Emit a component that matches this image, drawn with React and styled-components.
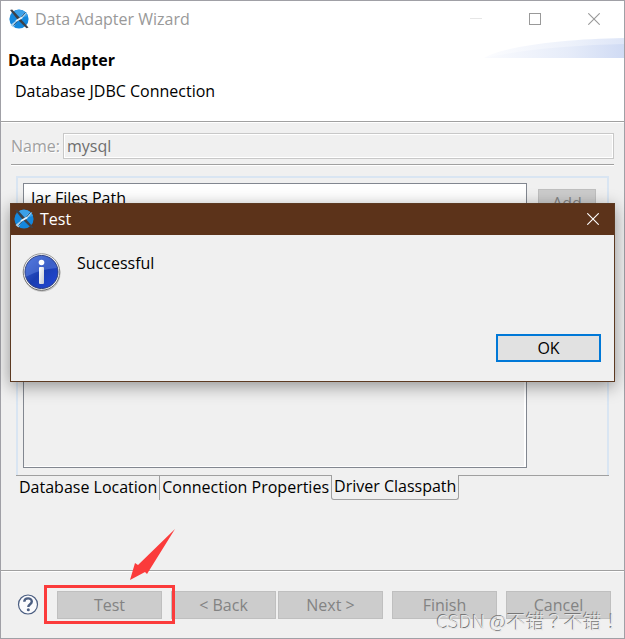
import React, { useState } from 'react';
import styled, { createGlobalStyle } from 'styled-components';

const GlobalStyle = createGlobalStyle`
  * {
    box-sizing: border-box;
  }

  body {
    margin: 0;
    background-color: #f0f0f0;
    color: #000;
    font-family: 'Open Sans', 'Noto Sans', 'Noto Sans CJK SC', sans-serif;
    font-size: 16px;
    line-height: 20px;
  }

  button,
  input {
    font: inherit;
  }
`;

const Window = styled.main`
  position: relative;
  display: flex;
  flex-direction: column;
  min-height: 100vh;
  border: 1px solid #a0a0a6;
  background-color: #f0f0f0;
`;

const TitleBar = styled.div`
  display: flex;
  align-items: center;
  height: 37px;
  padding: 0 8px 2px;
  background-color: #fff;
  color: #999;

  svg {
    flex: none;
  }
`;

const WindowTitle = styled.span`
  flex: 1;
  margin-left: 6px;
`;

const WindowControls = styled.div`
  display: flex;
  gap: 35px;
  margin-right: 10px;
`;

const ControlButton = styled.button`
  display: flex;
  align-items: center;
  justify-content: center;
  width: 24px;
  height: 24px;
  padding: 0;
  border: none;
  background: none;
  color: ${({ $color }) => $color};
`;

const Header = styled.header`
  display: flex;
  justify-content: space-between;
  align-items: flex-start;
  height: 84px;
  border-bottom: 1px solid #a0a0a0;
  background-color: #fff;
`;

const HeaderText = styled.div`
  padding: 12px 0 0 7px;
`;

const Heading = styled.h1`
  margin: 0;
  font-size: 16px;
  line-height: 20px;
  font-weight: 700;
`;

const Subheading = styled.p`
  margin: 11px 0 0 7px;
`;

const Content = styled.section`
  flex: 1;
  padding: 10px 10px 0;
  border-top: 1px solid #fff;
`;

const NameRow = styled.div`
  display: flex;
  align-items: center;
  gap: 3px;
`;

const NameLabel = styled.label`
  color: #a0a0a0;
  text-shadow: 1px 1px 0 #fff;
`;

const NameInput = styled.input`
  flex: 1;
  min-width: 0;
  height: 26px;
  padding: 0 3px;
  border: 1px solid #c8c8c8;
  border-radius: 0;
  outline: none;
  background-color: #f0f0f0;
  box-shadow: inset 0 0 0 1px #fff;
  color: #6d6d6d;
`;

const Separator = styled.hr`
  height: 2px;
  margin: 5px 0 10px;
  border: none;
  border-top: 1px solid #a0a0a0;
  border-bottom: 1px solid #fff;
`;

const Panel = styled.div`
  display: flex;
  align-items: flex-start;
  gap: 11px;
  margin: 0 5px;
  padding: 5px 11px 7px 5px;
  border: 2px solid #d9e5f2;
  border-bottom: none;
`;

const JarTable = styled.table`
  flex: 1;
  height: 285px;
  border: 1px solid #828790;
  border-spacing: 0;
  box-shadow: inset -2px -1px 0 #fff;

  th {
    height: 28px;
    padding: 0 7px;
    background-color: #fff;
    font-weight: 400;
    text-align: left;
  }
`;

const GrayButton = styled.button`
  width: ${({ $width }) => $width || 105}px;
  height: 28px;
  padding: 0;
  border: 1px solid #bfbfbf;
  background-color: #ccc;
  color: #838383;
`;

const AddButton = styled(GrayButton)`
  margin-top: 6px;
`;

const Tabs = styled.div`
  display: flex;
  margin: 0 5px;

  &::after {
    content: '';
    flex: 1;
    border-top: 1px solid #a0a0a0;
  }
`;

const Tab = styled.button`
  height: 25px;
  padding: 0 2px 2px;
  border: 0 solid #a0a0a0;
  background: none;
  color: #000;
  border-width: ${({ $active }) => ($active ? '0 1px 1px' : '1px 0 0')};
  border-radius: ${({ $active }) => ($active ? '0 0 3px 3px' : '0')};

  &:first-child {
    border-right-width: 1px;
    padding-left: 3px;
  }
`;

const Footer = styled.footer`
  display: flex;
  align-items: center;
  height: 68px;
  padding: 0 13px 0 16px;
  border-top: 1px solid #a0a0a0;
  box-shadow: inset 0 1px 0 #fff;
`;

const HelpButton = styled.button`
  display: flex;
  width: 22px;
  height: 22px;
  padding: 0;
  border: none;
  background: none;
`;

const ButtonRow = styled.div`
  display: flex;
  flex: 1;
  justify-content: flex-end;
  gap: 9px;
`;

const StepButtons = styled.div`
  display: flex;
  gap: 2px;
`;

const Highlighted = styled.div`
  position: relative;
  z-index: 1;
  display: flex;

  &::after {
    content: '';
    position: absolute;
    inset: -6px -13px -5px -13px;
    border: 3px solid #fb3b3b;
    pointer-events: none;
  }
`;

const ArrowMark = styled.svg`
  position: absolute;
  left: 73px;
  bottom: 38px;
`;

const Dialog = styled.section`
  position: absolute;
  top: 202px;
  left: 9px;
  right: 9px;
  border: 1px solid #5c3a22;
  background-color: #f0f0f0;
  box-shadow: 0 4px 16px rgba(0, 0, 0, 0.4);
`;

const DialogBar = styled.div`
  display: flex;
  align-items: center;
  height: 31px;
  padding: 0 9px 2px 3px;
  background-color: #5c331a;
  color: #fff;
`;

const DialogBody = styled.div`
  display: flex;
  align-items: flex-start;
  gap: 15px;
  padding: 18px 11px 0;

  p {
    margin: 0;
  }
`;

const DialogActions = styled.div`
  display: flex;
  justify-content: flex-end;
  padding: 41px 13px 19px;
`;

const OkButton = styled.button`
  width: 105px;
  height: 28px;
  padding: 0;
  border: 2px solid #0078d7;
  background-color: #e1e1e1;
  color: #000;
`;

const Watermark = styled.span`
  position: absolute;
  right: 3px;
  bottom: 5px;
  color: #e6e6e6;
  font-family: 'Noto Sans CJK JP', sans-serif;
  font-size: 19px;
  font-weight: 300;
  line-height: 24px;
  text-shadow: -1px -1px 0 #777;
  white-space: nowrap;
  pointer-events: none;
`;

const AppIcon = () => (
  <svg width="20" height="20" viewBox="0 0 20 20" aria-hidden="true">
    <circle cx="10" cy="10" r="9.6" fill="#1487dc" />
    <path d="M5 2.2A9.6 9.6 0 0 1 19 7L11 9Z" fill="#3ba0e8" />
    <path d="M9 10L1.500 16 4.500 18.500Z" fill="#a9d3f0" />
    <path d="M9.500 10.500L14 5.500 18.500 3 13.500 9Z" fill="#b9dcf4" />
    <path d="M1 1L3.200 0.500L10.500 8.500L19.500 18.500L17.500 19.200L8.500 10.500Z" fill="#3e4147" />
    <path d="M4.500 16.500L16.500 3.500" stroke="#2b567a" strokeWidth="1" />
    <path d="M7 12L13 8.500" stroke="#e4f1fa" strokeWidth="2" />
  </svg>
);

const CloseIcon = ({ size = 12 }) => (
  <svg width={size} height={size} viewBox="0 0 12 12" aria-hidden="true">
    <path d="M0.300 0.300L11.700 11.700M11.700 0.300L0.300 11.700" stroke="currentColor" strokeWidth="1.100" />
  </svg>
);

const InfoIcon = () => (
  <svg width="40" height="40" viewBox="0 0 40 40" aria-hidden="true">
    <defs>
      <linearGradient id="infoRim" x1="0" y1="0" x2="0" y2="1">
        <stop offset="0" stopColor="#999" />
        <stop offset="1" stopColor="#666" />
      </linearGradient>
      <linearGradient id="infoFill" x1="0" y1="0" x2="1" y2="1">
        <stop offset="0" stopColor="#3f68d8" />
        <stop offset="0.5" stopColor="#1a3db0" />
        <stop offset="1" stopColor="#2448dc" />
      </linearGradient>
      <linearGradient id="infoLetter" x1="0" y1="0" x2="1" y2="1">
        <stop offset="0" stopColor="#fff" />
        <stop offset="1" stopColor="#c4c8d2" />
      </linearGradient>
    </defs>
    <circle cx="20" cy="20.500" r="18.500" fill="#aaa" opacity="0.600" />
    <circle cx="19.500" cy="19" r="18.300" fill="#f4f4f4" stroke="url(#infoRim)" />
    <circle cx="19.500" cy="19" r="16.500" fill="url(#infoFill)" stroke="#2a3c7c" />
    <path d="M3.500 20A16 16 0 0 1 35 15Q18 16 3.500 24Z" fill="#7da0f0" opacity="0.350" />
    <circle cx="19.500" cy="9.500" r="2.800" fill="#fff" />
    <rect x="17" y="14" width="5" height="17" rx="1" fill="url(#infoLetter)" />
  </svg>
);

const HelpIcon = () => (
  <svg width="22" height="22" viewBox="0 0 22 22" aria-hidden="true">
    <circle cx="11" cy="10.500" r="9.500" fill="#fbfbfd" stroke="#4c5f82" strokeWidth="1.200" />
    <path
      d="M7.300 7.800C7.300 3.300 14.800 3.300 14.800 7.500C14.800 10.300 11.300 10.100 11.300 13.100"
      fill="none"
      stroke="#4c5f82"
      strokeWidth="2.400"
    />
    <circle cx="11.300" cy="15.800" r="1.500" fill="#4c5f82" />
  </svg>
);

const HeaderSwoosh = () => (
  <svg width="140" height="20" viewBox="0 0 140 20" aria-hidden="true">
    <defs>
      <linearGradient id="swoosh" x1="0" y1="0" x2="1" y2="0">
        <stop offset="0" stopColor="#fafbfe" />
        <stop offset="0.6" stopColor="#e6ecf9" />
        <stop offset="1" stopColor="#d0dbf4" />
      </linearGradient>
    </defs>
    <path d="M0 20C20 8 80 1 140 0V20Z" fill="url(#swoosh)" opacity="0.700" />
    <path d="M0 20C35 12 90 7 140 6V20Z" fill="url(#swoosh)" />
  </svg>
);

const tabs = ['Database Location', 'Connection Properties', 'Driver Classpath'];

const App = () => {
  const [activeTab, setActiveTab] = useState('Driver Classpath');

  return (
    <>
      <GlobalStyle />
      <Window>
        <TitleBar>
          <AppIcon />
          <WindowTitle>Data Adapter Wizard</WindowTitle>
          <WindowControls>
            <ControlButton $color="#e6e6e6" aria-label="Minimize" disabled>
              <svg width="12" height="12" viewBox="0 0 12 12">
                <path d="M0 5.500H12" stroke="currentColor" />
              </svg>
            </ControlButton>
            <ControlButton $color="#999" aria-label="Maximize">
              <svg width="12" height="12" viewBox="0 0 12 12">
                <rect x="0.500" y="0.500" width="11" height="11" fill="none" stroke="currentColor" />
              </svg>
            </ControlButton>
            <ControlButton $color="#999" aria-label="Close">
              <CloseIcon />
            </ControlButton>
          </WindowControls>
        </TitleBar>

        <Header>
          <HeaderText>
            <Heading>Data Adapter</Heading>
            <Subheading>Database JDBC Connection</Subheading>
          </HeaderText>
          <HeaderSwoosh />
        </Header>

        <Content>
          <NameRow>
            <NameLabel htmlFor="adapter-name">Name:</NameLabel>
            <NameInput id="adapter-name" defaultValue="mysql" disabled />
          </NameRow>
          <Separator />
          <Panel>
            <JarTable>
              <thead>
                <tr>
                  <th>Jar Files Path</th>
                </tr>
              </thead>
              <tbody>
                <tr>
                  <td />
                </tr>
              </tbody>
            </JarTable>
            <AddButton $width={58} disabled>Add</AddButton>
          </Panel>
          <Tabs role="tablist">
            {tabs.map((tab) => (
              <Tab
                key={tab}
                role="tab"
                aria-selected={tab === activeTab}
                $active={tab === activeTab}
                onClick={() => setActiveTab(tab)}
              >
                {tab}
              </Tab>
            ))}
          </Tabs>
        </Content>

        <Footer>
          <HelpButton aria-label="Help">
            <HelpIcon />
          </HelpButton>
          <ButtonRow>
            <Highlighted>
              <GrayButton disabled>Test</GrayButton>
              <ArrowMark width="46" height="52" viewBox="0 0 46 52">
                <path d="M45 0L17 45L15 43L0 51L5 34L8 36Z" fill="#fb3b3b" />
              </ArrowMark>
            </Highlighted>
            <StepButtons>
              <GrayButton disabled>&lt; Back</GrayButton>
              <GrayButton disabled>Next &gt;</GrayButton>
            </StepButtons>
            <GrayButton disabled>Finish</GrayButton>
            <GrayButton disabled>Cancel</GrayButton>
          </ButtonRow>
        </Footer>

        <Dialog role="dialog" aria-label="Test">
          <DialogBar>
            <AppIcon />
            <WindowTitle>Test</WindowTitle>
            <ControlButton $color="#fff" aria-label="Close dialog">
              <CloseIcon />
            </ControlButton>
          </DialogBar>
          <DialogBody>
            <InfoIcon />
            <p>Successful</p>
          </DialogBody>
          <DialogActions>
            <OkButton>OK</OkButton>
          </DialogActions>
        </Dialog>

        <Watermark>CSDN @不错？不错！</Watermark>
      </Window>
    </>
  );
};

export default App;
